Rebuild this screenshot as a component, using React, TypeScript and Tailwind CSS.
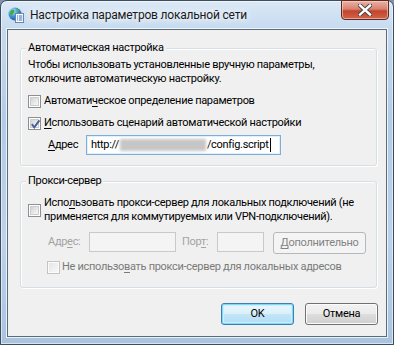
import React from "react";

function Check({ checked = false, disabled = false }: { checked?: boolean; disabled?: boolean }) {
  return (
    <span
      className={
        disabled
          ? "relative flex h-[13px] w-[13px] shrink-0 items-center justify-center border border-[#c4c4c4] bg-[#fbfbfb]"
          : "relative flex h-[13px] w-[13px] shrink-0 items-center justify-center border border-[#8e8f8f] bg-white"
      }
    >
      <span
        className={
          disabled
            ? "h-[9px] w-[9px] bg-[linear-gradient(135deg,#e6e6e6,#f8f8f8)]"
            : "h-[9px] w-[9px] border border-[#c9cdd2] bg-[linear-gradient(135deg,#d4d4d4,#f7f7f7)]"
        }
      />
      {checked && (
        <svg className="absolute left-[1px] top-[1px]" width="11" height="11" viewBox="0 0 11 11">
          <path d="M1.8 5.2 L4.3 8.4 L9.4 1.4" fill="none" stroke="#4a5f97" strokeWidth="1.9" />
        </svg>
      )}
    </span>
  );
}

function U({ children }: { children: React.ReactNode }) {
  return <span className="underline decoration-1 underline-offset-[2px]">{children}</span>;
}

function TitleIcon() {
  return (
    <svg width="16" height="16" viewBox="0 0 16 16">
      <defs>
        <radialGradient id="g" cx="0.35" cy="0.3" r="0.8">
          <stop offset="0" stopColor="#bfe7ff" />
          <stop offset="0.5" stopColor="#3d8fd8" />
          <stop offset="1" stopColor="#1a4f9a" />
        </radialGradient>
      </defs>
      <circle cx="7" cy="7" r="6.5" fill="url(#g)" />
      <path d="M2.5 4 C4 2 6 2.5 6.5 4 C7 5.5 5 6 4.5 7.5 C4 9 2.5 8.5 1.8 7 Z" fill="#3fae3a" />
      <path d="M8 1.5 C10 1.5 11.5 3 10.5 4 C9.5 4.8 8 3.5 8 1.5 Z" fill="#4cbb45" />
      <rect x="7.5" y="6.5" width="8" height="9" fill="#ffffff" stroke="#6c86a8" strokeWidth="1" />
      <rect x="9" y="8.5" width="1.2" height="1" fill="#2e6fc4" />
      <rect x="11" y="8.5" width="3.3" height="1" fill="#2e6fc4" />
      <rect x="9" y="10.5" width="1.2" height="1" fill="#2e6fc4" />
      <rect x="11" y="10.5" width="3.3" height="1" fill="#2e6fc4" />
      <rect x="9" y="12.5" width="1.2" height="1" fill="#2e6fc4" />
      <rect x="11" y="12.5" width="3.3" height="1" fill="#2e6fc4" />
    </svg>
  );
}

export default function App() {
  return (
    <div className="h-[345px] w-[394px] overflow-hidden bg-[#7f93a8] font-['Roboto',sans-serif] text-[11px] tracking-[-0.3px] text-black">
      <div className="relative flex h-[345px] w-[394px] flex-col rounded-t-[7px] border border-[#3e4d5e] bg-[linear-gradient(180deg,#dbe8f6_0px,#c6daef_28px,#b3cbe5_120px,#bcd2ea_240px,#a9c3df_345px)] shadow-[inset_0_0_0_1px_rgba(255,255,255,0.55)]">
        <div className="flex h-[28px] shrink-0 items-center pl-[7px]">
          <TitleIcon />
          <span className="ml-[6px] whitespace-nowrap text-[12px] tracking-[-0.2px] text-[#1a1a1a] [text-shadow:0_0_6px_#ffffff,0_0_10px_#ffffff]">
            Настройка параметров локальной сети
          </span>
        </div>
        <div className="absolute right-[4px] top-[-1px] flex h-[20px] w-[48px] items-center justify-center rounded-b-[4px] border border-[#5b2a22] bg-[linear-gradient(180deg,#eab2a6_0%,#d9826f_45%,#c4442c_55%,#d0634b_100%)] shadow-[inset_0_0_0_1px_rgba(255,220,210,0.55)]">
          <svg width="14" height="12" viewBox="0 0 14 12">
            <path d="M2 1.5 L12 10.5 M12 1.5 L2 10.5" stroke="#3d3d3d" strokeWidth="4.2" strokeLinecap="square" />
            <path d="M2 1.5 L12 10.5 M12 1.5 L2 10.5" stroke="#ffffff" strokeWidth="2.4" strokeLinecap="square" />
          </svg>
        </div>

        <div className="mx-[6px] h-[308px] shrink-0 border border-[#5a6b7d] bg-[#f0f0f0] pt-[11px] shadow-[0_0_0_1px_rgba(255,255,255,0.75)]">
          <fieldset className="ml-[12px] w-[357px] rounded-[3px] border border-[#d5dfe5] px-[7px] pb-[10px] shadow-[inset_1px_1px_0_#ffffff,1px_1px_0_#ffffff]">
            <legend className="-ml-[2px] whitespace-nowrap bg-[#f0f0f0] px-[2px] leading-[14px]">Автоматическая настройка</legend>
            <div className="mt-[3px] whitespace-nowrap leading-[14px]">
              Чтобы использовать установленные вручную параметры,
              <br />
              отключите автоматическую настройку.
            </div>
            <div className="mt-[8px] flex h-[14px] items-center">
              <Check />
              <span className="ml-[3px] whitespace-nowrap leading-[14px]">
                Автомати<U>ч</U>еское определение параметров
              </span>
            </div>
            <div className="mt-[8px] flex h-[14px] items-center">
              <Check checked />
              <span className="ml-[3px] whitespace-nowrap leading-[14px]">
                <U>И</U>спользовать сценарий автоматической настройки
              </span>
            </div>
            <div className="mt-[5px] flex items-center">
              <span className="ml-[20px] w-[38px] leading-[14px]">
                <U>А</U>дрес
              </span>
              <div className="flex h-[20px] w-[195px] items-center whitespace-nowrap border border-[#7aaedd] bg-white pl-[4px] shadow-[inset_0_0_0_1px_#e3f0fb]">
                <span>http://</span>
                <span className="mx-[1px] inline-block h-[12px] w-[86px] bg-[#c6c6c6] blur-[1.5px]" />
                <span>/config.script</span>
                <span className="ml-[1px] inline-block h-[14px] w-[1px] bg-black" />
              </div>
            </div>
          </fieldset>

          <fieldset className="ml-[12px] mt-[8px] w-[357px] rounded-[3px] border border-[#d5dfe5] px-[7px] pb-[13px] shadow-[inset_1px_1px_0_#ffffff,1px_1px_0_#ffffff]">
            <legend className="-ml-[2px] whitespace-nowrap bg-[#f0f0f0] px-[2px] leading-[14px]">Прокси-сервер</legend>
            <div className="mt-[8px] flex items-center">
              <Check />
              <span className="ml-[3px] whitespace-nowrap leading-[14px]">
                Испо<U>л</U>ьзовать прокси-сервер для локальных подключений (не
                <br />
                применяется для коммутируемых или VPN-подключений).
              </span>
            </div>
            <div className="mt-[8px] flex h-[22px] items-start">
              <span className="ml-[20px] mt-[3px] w-[41px] whitespace-nowrap leading-[14px] text-[#a3a3a3]">
                Адр<U>е</U>с:
              </span>
              <div className="h-[20px] w-[87px] border border-[#c9c9c9] bg-[#f4f4f4]" />
              <span className="ml-[6px] mt-[3px] w-[35px] whitespace-nowrap leading-[14px] text-[#a3a3a3]">
                Пор<U>т</U>:
              </span>
              <div className="h-[20px] w-[47px] border border-[#c9c9c9] bg-[#f4f4f4]" />
              <div className="ml-[9px] flex h-[22px] w-[93px] items-center justify-center whitespace-nowrap rounded-[3px] border border-[#b5b9bc] bg-[#f4f4f4] text-[#838383]">
                <span>
                  <U>Д</U>ополнительно
                </span>
              </div>
            </div>
            <div className="ml-[19px] mt-[6px] flex h-[14px] items-center">
              <Check disabled />
              <span className="ml-[2px] whitespace-nowrap leading-[14px] text-[#7a7a7a]">
                Не использо<U>в</U>ать прокси-сервер для локальных адресов
              </span>
            </div>
          </fieldset>

          <div className="mt-[15px] flex justify-end gap-[11px] pr-[8px]">
            <div className="flex h-[22px] w-[73px] items-center justify-center rounded-[3px] border border-[#3c7fb1] bg-[linear-gradient(180deg,#ecf7fd_0%,#dbf0fb_48%,#c2e6f8_52%,#b3dcf3_100%)] shadow-[inset_0_0_0_1px_#7fd8fb,inset_0_0_0_2px_#c9f0ff]">
              OK
            </div>
            <div className="flex h-[22px] w-[73px] items-center justify-center rounded-[3px] border border-[#707070] bg-[linear-gradient(180deg,#f2f2f2_0%,#ebebeb_48%,#dddddd_52%,#cfcfcf_100%)] shadow-[inset_0_0_0_1px_#fcfcfc]">
              Отмена
            </div>
          </div>
        </div>
      </div>
    </div>
  );
}
